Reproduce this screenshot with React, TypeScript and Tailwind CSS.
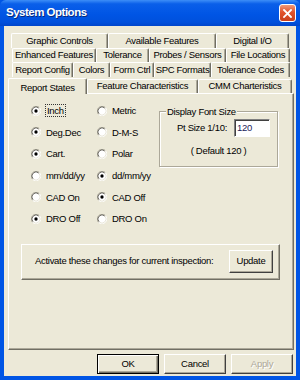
import React from "react";

const font = "font-['Liberation_Sans',Arial,sans-serif]";

function Radio({ checked }: { checked: boolean }) {
  return (
    <svg width="10" height="10" viewBox="0 0 12 12" className="shrink-0">
      <circle cx="6" cy="6" r="5.5" fill="#fff" />
      <path d="M1.9 10.1 A5.8 5.8 0 0 1 10.1 1.9" stroke="#9d9a8c" strokeWidth="1" fill="none" />
      <path d="M2.6 9.4 A4.8 4.8 0 0 1 9.4 2.6" stroke="#5a584f" strokeWidth="1" fill="none" />
      <path d="M10.1 1.9 A5.8 5.8 0 0 1 1.9 10.1" stroke="#ffffff" strokeWidth="1" fill="none" />
      <path d="M9.4 2.6 A4.8 4.8 0 0 1 2.6 9.4" stroke="#e4e1d2" strokeWidth="1" fill="none" />
      {checked && <circle cx="6" cy="6" r="2" fill="#000" />}
    </svg>
  );
}

function RadioItem({ label, checked, focus }: { label: string; checked: boolean; focus?: boolean }) {
  return (
    <div className="flex h-[21.6px] items-center">
      <Radio checked={checked} />
      <span
        className={
          "ml-[5px] leading-[11px] " +
          (focus ? "outline outline-1 outline-dotted outline-[#333] px-[1px] -ml-[-4px]" : "")
        }
      >
        {label}
      </span>
    </div>
  );
}

function Tab({ label, w }: { label: string; w: number }) {
  return (
    <div
      style={{ width: w }}
      className="h-full shrink-0 flex items-center justify-center border-t border-l border-white border-r border-r-[#716f64] rounded-t-[2px] shadow-[inset_-1px_0_0_#aca899] bg-[#ece9d8] whitespace-nowrap"
    >
      {label}
    </div>
  );
}

function Btn({ label, w, h, def, disabled }: { label: string; w: number; h: number; def?: boolean; disabled?: boolean }) {
  return (
    <div
      style={{ width: w, height: h }}
      className={
        "flex items-center justify-center bg-[#ece9d8] " +
        (def
          ? "border border-black shadow-[inset_1px_1px_0_#fff,inset_-1px_-1px_0_#716f64,inset_-2px_-2px_0_#aca899]"
          : "border-t border-l border-white border-b border-r border-b-[#404040] border-r-[#404040] shadow-[inset_-1px_-1px_0_#aca899]")
      }
    >
      <span className={disabled ? "text-[#aca899] [text-shadow:1px_1px_0_#fff]" : ""}>{label}</span>
    </div>
  );
}

export default function App() {
  return (
    <div
      className={
        "w-[300px] h-[380px] flex flex-col bg-[#0055e5] text-[9.5px] tracking-[-0.3px] text-black " + font
      }
    >
      {/* Title bar */}
      <div className="h-[26px] shrink-0 flex items-center justify-between pl-[6px] pr-[4px] bg-[linear-gradient(180deg,#3d8ef7_0%,#0a5fe9_15%,#0055e5_55%,#0050dc_85%,#0046cb_100%)] rounded-t-[6px]">
        <span className="text-white font-bold text-[11.5px] tracking-[-0.5px] [text-shadow:1px_1px_0_#0a2a7a]">
          System Options
        </span>
        <div className="w-[17px] h-[18px] rounded-[3px] border border-white bg-[linear-gradient(180deg,#f09a7a_0%,#e2532b_45%,#c9401c_100%)] flex items-center justify-center">
          <svg width="9" height="9" viewBox="0 0 9 9">
            <path d="M1 1 L8 8 M8 1 L1 8" stroke="#fff" strokeWidth="1.8" strokeLinecap="square" />
          </svg>
        </div>
      </div>

      {/* Body */}
      <div className="flex-1 mx-[4px] mb-[4px] bg-[#ece9d8] flex flex-col">
        {/* Tabs */}
        <div className="flex flex-col pt-[7px]">
          <div className="flex h-[14.5px] pl-[7px]">
            <Tab label="Graphic Controls" w={97} />
            <Tab label="Available Features" w={108} />
            <Tab label="Digital I/O" w={73} />
          </div>
          <div className="flex h-[14.5px] pl-[8px]">
            <Tab label="Enhanced Features" w={84} />
            <Tab label="Tolerance" w={53} />
            <Tab label="Probes / Sensors" w={77} />
            <Tab label="File Locations" w={64} />
          </div>
          <div className="flex h-[14.5px] pl-[8px]">
            <Tab label="Report Config" w={61} />
            <Tab label="Colors" w={37} />
            <Tab label="Form Ctrl" w={44} />
            <Tab label="SPC Formats" w={57} />
            <Tab label="Tolerance Codes" w={79} />
          </div>
          <div className="flex items-end h-[16.5px] pl-[4px]">
            <div className="w-[79px] h-[16.5px] shrink-0 flex items-start justify-center pt-[2px] border-t border-l border-white border-r border-r-[#716f64] rounded-t-[2px] shadow-[inset_-1px_0_0_#aca899] bg-[#ece9d8] relative z-10 mb-[-1px]">
              Report States
            </div>
            <div className="h-[14.5px] flex">
              <Tab label="Feature Characteristics" w={111} />
              <Tab label="CMM Charteristics" w={94} />
            </div>
          </div>
        </div>

        {/* Panel */}
        <div className="ml-[4px] w-[286px] h-[257px] border-t border-l border-white border-b border-r border-b-[#716f64] border-r-[#716f64] shadow-[inset_-1px_-1px_0_#aca899] flex flex-col">
          <div className="flex pt-[6px]">
            <div className="pl-[22px] w-[88px] flex flex-col">
              <RadioItem label="Inch" checked focus />
              <RadioItem label="Deg.Dec" checked />
              <RadioItem label="Cart." checked />
              <RadioItem label="mm/dd/yy" checked={false} />
              <RadioItem label="CAD On" checked={false} />
              <RadioItem label="DRO Off" checked />
            </div>
            <div className="w-[62px] flex flex-col">
              <RadioItem label="Metric" checked={false} />
              <RadioItem label="D-M-S" checked={false} />
              <RadioItem label="Polar" checked={false} />
              <RadioItem label="dd/mm/yy" checked />
              <RadioItem label="CAD Off" checked />
              <RadioItem label="DRO On" checked={false} />
            </div>
            {/* Group box */}
            <div className="mt-[11px] w-[119px] h-[56px] border border-[#aca899] shadow-[1px_1px_0_#fff,inset_1px_1px_0_#fff] flex flex-col">
              <div className="h-0 flex">
                <span className="ml-[6px] -mt-[6px] px-[1px] h-[11px] leading-[11px] bg-[#ece9d8]">Display Font Size</span>
              </div>
              <div className="flex items-center pl-[17px] mt-[7px]">
                <span className="w-[57px]">Pt Size 1/10:</span>
                <div className="w-[36px] h-[18px] bg-white border-t border-l border-[#808080] border-b border-r border-b-white border-r-white shadow-[inset_1px_1px_0_#404040] pl-[2px] flex items-start pt-[1px] text-[#1c1c5a]">
                  120
                </div>
              </div>
              <div className="mt-[7px] text-center">( Default 120 )</div>
            </div>
          </div>

          {/* Activate box */}
          <div className="ml-[12px] mt-[14px] w-[259px] h-[36px] flex items-center justify-between pl-[13px] pr-[6px] border-t border-l border-white border-b border-r border-b-[#716f64] border-r-[#716f64] shadow-[inset_-1px_-1px_0_#aca899]">
            <span>Activate these changes for current inspection:</span>
            <Btn label="Update" w={44} h={23} />
          </div>
        </div>

        {/* Bottom buttons */}
        <div className="flex justify-end gap-[5px] pr-[3px] mt-[4px]">
          <Btn label="OK" w={62} h={20} def />
          <Btn label="Cancel" w={62} h={20} />
          <Btn label="Apply" w={62} h={20} disabled />
        </div>
      </div>
    </div>
  );
}
